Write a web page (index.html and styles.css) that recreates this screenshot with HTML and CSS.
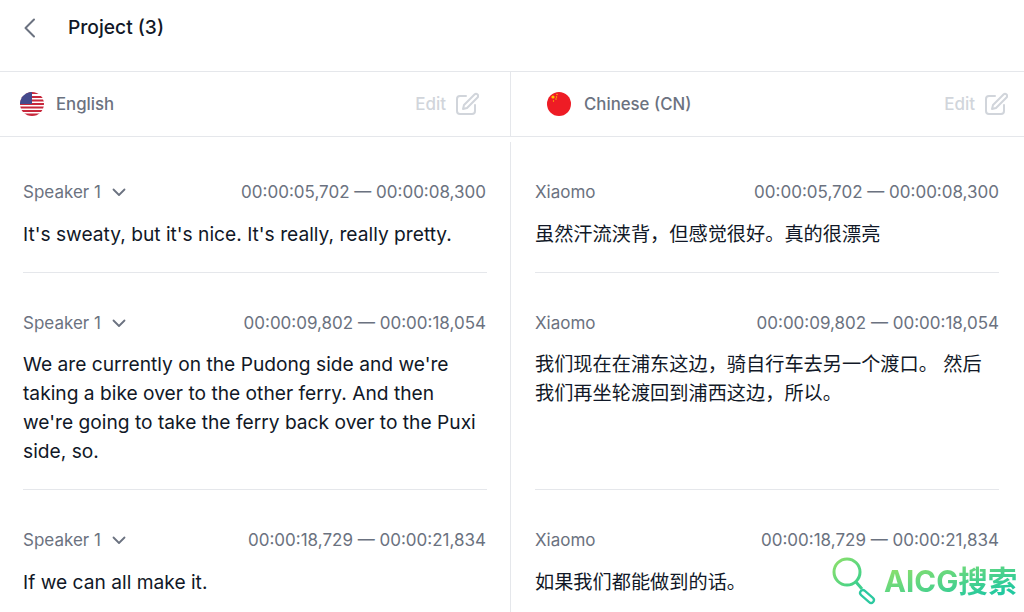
FILE: index.html
```html
<!DOCTYPE html>
<html lang="en">
<head>
<meta charset="utf-8">
<title>Project (3)</title>
<link rel="stylesheet" href="styles.css">
</head>
<body>
<div class="page">
  <header class="topbar">
    <svg class="back" width="24" height="24" viewBox="0 0 24 24" fill="none"><path d="M16 3.500 7.500 12l8.500 8.500" stroke="#6b7280" stroke-width="2" stroke-linecap="round" stroke-linejoin="round"/></svg>
    <h1 class="title">Project (3)</h1>
  </header>
  <section class="langbar">
    <div class="lang lang-left">
      <svg class="flag" width="24" height="24" viewBox="0 0 24 24">
        <defs><clipPath id="c1"><circle cx="12" cy="12" r="12"/></clipPath></defs>
        <g clip-path="url(#c1)">
          <rect width="24" height="24" fill="#fff"/>
          <g fill="#c8283c">
            <rect y="0" width="24" height="2"/><rect y="4" width="24" height="2"/><rect y="7.500" width="24" height="2"/><rect y="11" width="24" height="2"/><rect y="14.500" width="24" height="2"/><rect y="18" width="24" height="2"/><rect y="21.500" width="24" height="2.500"/>
          </g>
          <rect width="12" height="12" fill="#454a8c"/>
        </g>
      </svg>
      <span class="lang-name">English</span>
      <span class="edit">Edit
        <svg width="24" height="24" viewBox="0 0 24 24" fill="none" stroke="#d1d5db" stroke-width="2" stroke-linecap="round" stroke-linejoin="round"><path d="M11 4H5a3 3 0 0 0-3 3v12a3 3 0 0 0 3 3h12a3 3 0 0 0 3-3v-6"/><path d="M19.500 2.500a2.100 2.100 0 0 1 3 3L12 16l-4 1 1-4z"/></svg>
      </span>
    </div>
    <div class="lang lang-right">
      <svg class="flag flag-cn" width="24" height="24" viewBox="0 0 24 24">
        <circle cx="12" cy="12" r="12" fill="#ee1c25"/>
        <g fill="#ffc400"><circle cx="6" cy="5" r="1.600"/><circle cx="10" cy="2.500" r=".7"/><circle cx="9.500" cy="5" r=".7"/><circle cx="9" cy="7" r=".7"/><circle cx="6.500" cy="9" r=".7"/></g>
      </svg>
      <span class="lang-name">Chinese (CN)</span>
      <span class="edit">Edit
        <svg width="24" height="24" viewBox="0 0 24 24" fill="none" stroke="#d1d5db" stroke-width="2" stroke-linecap="round" stroke-linejoin="round"><path d="M11 4H5a3 3 0 0 0-3 3v12a3 3 0 0 0 3 3h12a3 3 0 0 0 3-3v-6"/><path d="M19.500 2.500a2.100 2.100 0 0 1 3 3L12 16l-4 1 1-4z"/></svg>
      </span>
    </div>
  </section>
  <main class="rows">
    <div class="cell cell-left">
      <div class="meta"><span class="speaker">Speaker 1 <svg class="chev" width="16" height="16" viewBox="0 0 16 16" fill="none"><path d="M2.500 5.500 8 11l5.500-5.500" stroke="#6b7280" stroke-width="1.800" stroke-linecap="round" stroke-linejoin="round"/></svg></span><span>00:00:05,702 — 00:00:08,300</span></div>
      <p class="text">It's sweaty, but it's nice. It's really, really pretty.</p>
    </div>
    <div class="cell cell-right">
      <div class="meta"><span class="speaker">Xiaomo</span><span>00:00:05,702 — 00:00:08,300</span></div>
      <p class="text text-cn">虽然汗流浃背，但感觉很好。真的很漂亮</p>
    </div>
    <div class="cell cell-left">
      <div class="meta"><span class="speaker">Speaker 1 <svg class="chev" width="16" height="16" viewBox="0 0 16 16" fill="none"><path d="M2.500 5.500 8 11l5.500-5.500" stroke="#6b7280" stroke-width="1.800" stroke-linecap="round" stroke-linejoin="round"/></svg></span><span>00:00:09,802 — 00:00:18,054</span></div>
      <p class="text">We are currently on the Pudong side and we're taking a bike over to the other ferry. And then we're going to take the ferry back over to the Puxi side, so.</p>
    </div>
    <div class="cell cell-right">
      <div class="meta"><span class="speaker">Xiaomo</span><span>00:00:09,802 — 00:00:18,054</span></div>
      <p class="text text-cn">我们现在在浦东这边，骑自行车去另一个渡口。 然后我们再坐轮渡回到浦西这边，所以。</p>
    </div>
    <div class="cell cell-left">
      <div class="meta"><span class="speaker">Speaker 1 <svg class="chev" width="16" height="16" viewBox="0 0 16 16" fill="none"><path d="M2.500 5.500 8 11l5.500-5.500" stroke="#6b7280" stroke-width="1.800" stroke-linecap="round" stroke-linejoin="round"/></svg></span><span>00:00:18,729 — 00:00:21,834</span></div>
      <p class="text">If we can all make it.</p>
    </div>
    <div class="cell cell-right">
      <div class="meta"><span class="speaker">Xiaomo</span><span>00:00:18,729 — 00:00:21,834</span></div>
      <p class="text text-cn">如果我们都能做到的话。</p>
    </div>
  </main>
  <div class="watermark">
    <svg class="wm-icon" width="52" height="50" viewBox="0 0 52 50" fill="none">
      <defs><linearGradient id="g1" x1="0" y1="0" x2="1" y2="1"><stop offset="0" stop-color="#8ee06a"/><stop offset="1" stop-color="#3ad08c"/></linearGradient></defs>
      <circle cx="15" cy="16" r="13" stroke="url(#g1)" stroke-width="3"/>
      <path d="M24 26l6 7" stroke="#3fcf8e" stroke-width="3"/>
      <path d="M31 37l8 7" stroke="#2cc9a0" stroke-width="8" stroke-linecap="round"/>
      <path d="M31 37l8 7" stroke="#fff" stroke-width="3.500" stroke-linecap="round"/>
    </svg>
    <span class="wm-text">AICG搜索</span>
  </div>
</div>
</body>
</html>
```
FILE: styles.css
```css
* { box-sizing: border-box; }
html, body { margin: 0; height: 100%; overflow: hidden; background: #fff; }
body { font-family: Inter, "Noto Sans CJK SC", sans-serif; color: #111827; }
.page { position: relative; width: 1024px; height: 612px; overflow: hidden; }
.topbar { height: 72px; display: flex; align-items: center; padding: 0 0 16px 18px; border-bottom: 1px solid #e5e7eb; }
.back { flex: none; }
.title { margin: 0 0 1px 26px; font-size: 19.2px; font-weight: 500; line-height: 24px; }
.langbar { display: grid; grid-template-columns: 511px 513px; height: 65px; border-bottom: 1px solid #e5e7eb; }
.lang { display: flex; align-items: center; color: #6b7280; font-size: 16.8px; font-weight: 500; }
.lang-left { padding: 0 31px 1px 20px; border-right: 1px solid #e5e7eb; }
.lang-right { padding: 0 16px 1px 36px; }
.flag { flex: none; margin-right: 12px; }
.flag-cn { margin-right: 13px; }
.lang-name { flex: 1; }
.edit { display: flex; align-items: center; gap: 9px; color: #d1d5db; font-size: 17px; font-weight: 500; }
.rows { display: grid; grid-template-columns: 511px 513px; margin-top: 5px; }
.cell { display: flex; flex-direction: column; padding-top: 38px; }
.cell-left { padding-left: 23px; padding-right: 23px; border-right: 1px solid #e5e7eb; }
.cell-left .meta { padding-right: 1px; }
.cell-right { padding-left: 24px; padding-right: 25px; }
.meta { display: flex; justify-content: space-between; align-items: center; height: 24px; color: #6b7280; font-size: 17px; }
.speaker { display: flex; align-items: center; gap: 10px; }
.text { flex: 1; margin: 15.600px 0 0; padding-bottom: 23.400px; font-size: 19.2px; line-height: 28.8px; border-bottom: 1px solid #e5e7eb; }
.cell:nth-last-child(-n+2) .text { border-bottom: none; padding-bottom: 60px; }
.watermark { position: absolute; left: 832px; top: 556px; display: flex; align-items: center; }
.wm-icon { flex: none; }
.wm-text { font-size: 29.5px; font-weight: 700; line-height: 36px; background: linear-gradient(165deg, #8ee06a 10%, #22c9a0 85%); -webkit-background-clip: text; background-clip: text; color: transparent; }
```
